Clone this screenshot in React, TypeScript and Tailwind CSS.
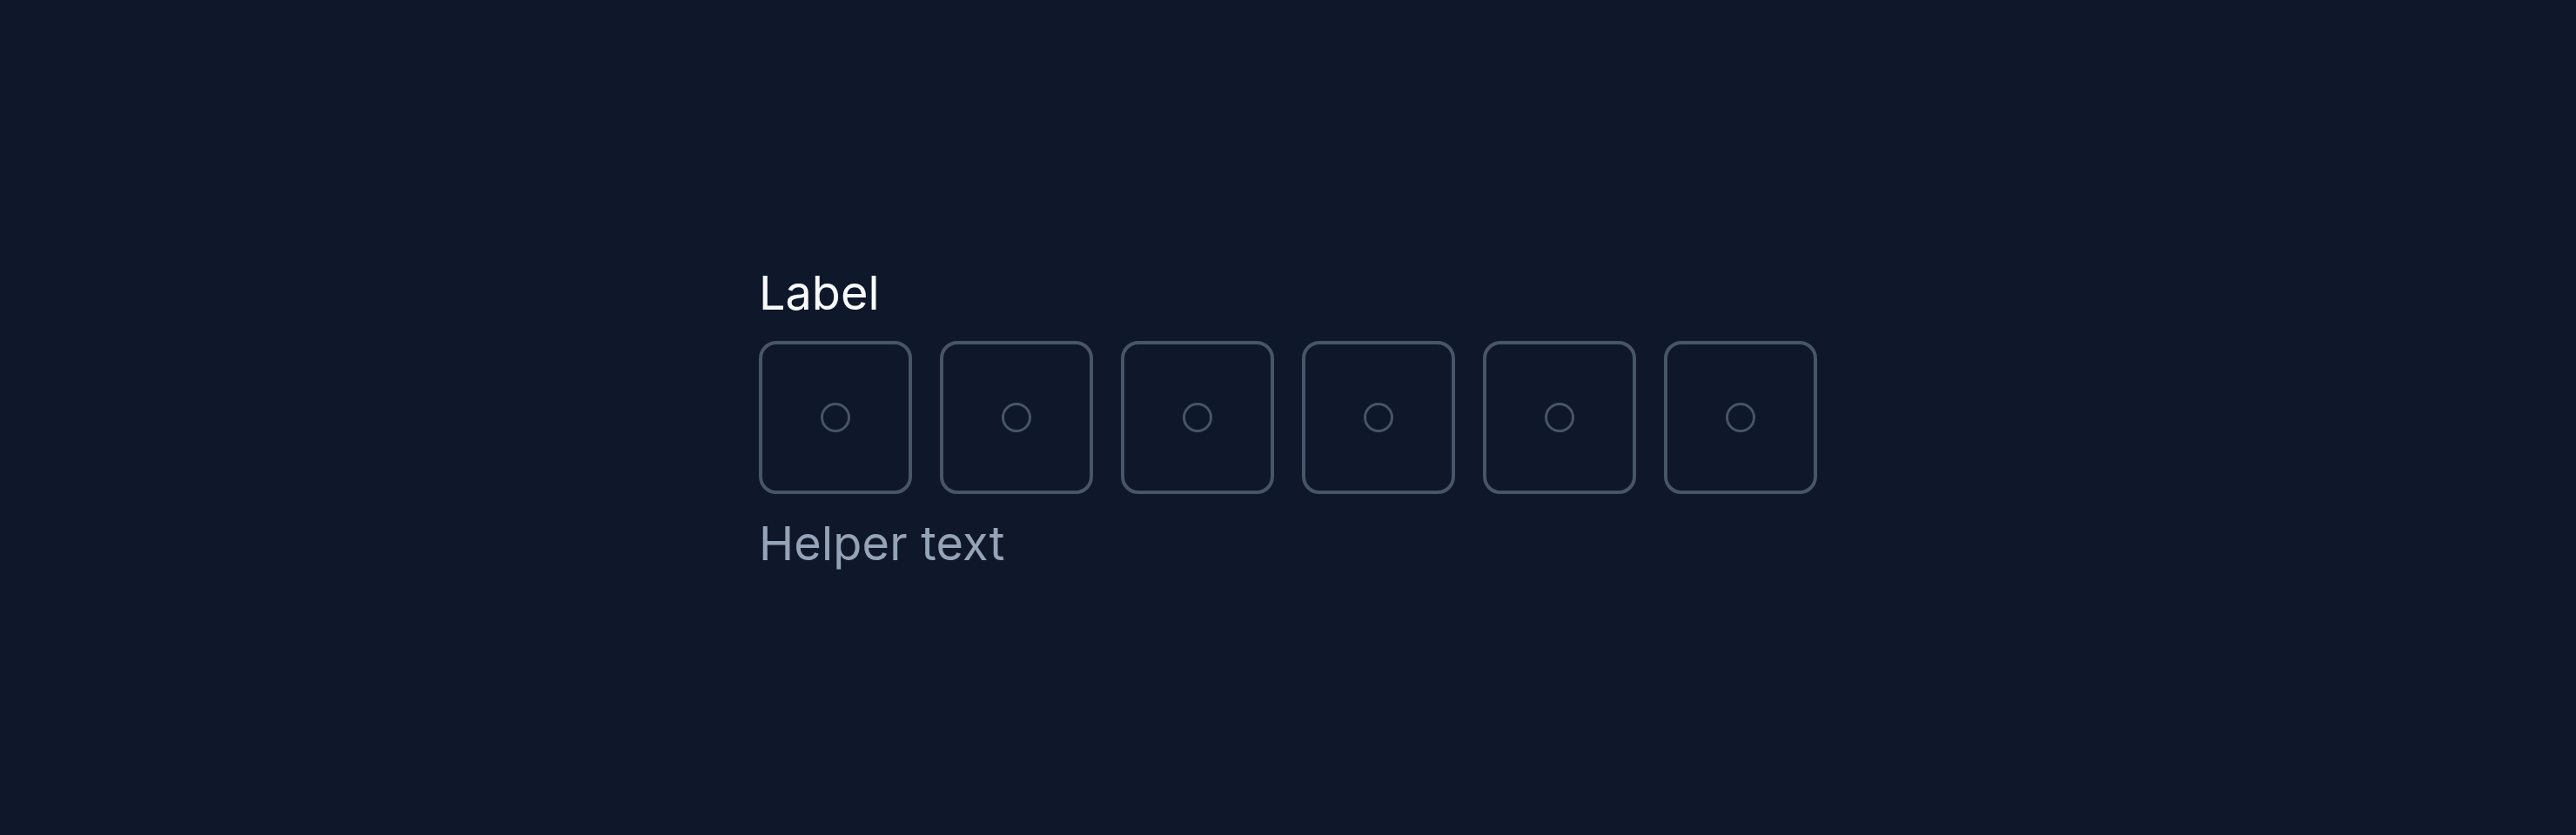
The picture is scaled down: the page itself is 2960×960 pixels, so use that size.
import React from "react";

export default function App() {
  const boxes = [0, 1, 2, 3, 4, 5];
  return (
    <div
      className="w-full h-screen bg-[#0f172a] flex items-center justify-center"
      style={{ fontFamily: "Inter, 'Noto Sans', sans-serif" }}
    >
      <div className="flex flex-col pt-[2px]">
        <div className="text-[54px] leading-none text-[#f8fafc] mb-[28px]">Label</div>
        <div className="flex gap-[32px]">
          {boxes.map((i) => (
            <div
              key={i}
              className="w-[176px] h-[176px] rounded-[20px] border-4 border-[#475569] flex items-center justify-center"
            >
              <div className="w-[34px] h-[34px] rounded-full border-[3.5px] border-[#475569]" />
            </div>
          ))}
        </div>
        <div className="text-[54px] leading-none tracking-[0.2px] text-[#94a3b8] mt-[30px]">Helper text</div>
      </div>
    </div>
  );
}
